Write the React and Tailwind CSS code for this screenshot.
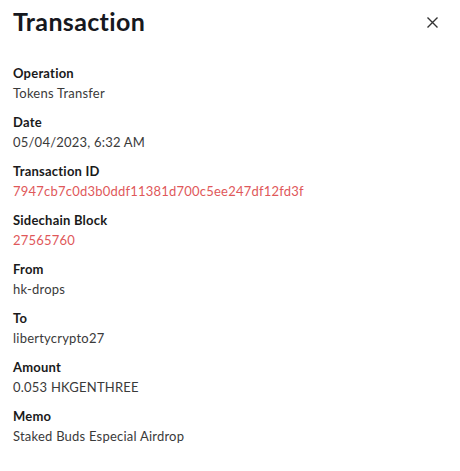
import React from "react";

const rows = [
  { label: "Operation", value: "Tokens Transfer" },
  { label: "Date", value: "05/04/2023, 6:32 AM" },
  { label: "Transaction ID", value: "7947cb7c0d3b0ddf11381d700c5ee247df12fd3f", link: true },
  { label: "Sidechain Block", value: "27565760", link: true },
  { label: "From", value: "hk-drops" },
  { label: "To", value: "libertycrypto27" },
  { label: "Amount", value: "0.053 HKGENTHREE" },
  { label: "Memo", value: "Staked Buds Especial Airdrop" },
];

export default function App() {
  return (
    <div className="w-[460px] h-[471px] bg-white px-[13px] pt-[4px] font-['Lato','Noto_Sans',sans-serif] text-[#1c1c1c]">
      {/* Header */}
      <div className="flex items-center justify-between h-[36px]">
        <h1 className="text-[25px] font-bold tracking-[0.35px] text-[#161820]">Transaction</h1>
        <button className="mr-[7px] w-[16px] h-[16px] flex items-center justify-center text-[#333]">
          <svg width="11" height="11" viewBox="0 0 11 11" fill="none" stroke="currentColor" strokeWidth="1.4">
            <path d="M0.5 0.5L10.5 10.5M10.5 0.5L0.5 10.5" />
          </svg>
        </button>
      </div>

      {/* Details */}
      <div className="flex flex-col gap-[9px] mt-[23px]">
        {rows.map((row) => (
          <div key={row.label} className="flex flex-col tracking-[0.22px]">
            <span className="text-[13px] leading-[20px] font-bold text-[#1a1a1a]">{row.label}</span>
            <span
              className={`text-[13px] leading-[20px] ${row.link ? "text-[#e0585a]" : "text-[#3a3a3a]"}`}
            >
              {row.value}
            </span>
          </div>
        ))}
      </div>
    </div>
  );
}
